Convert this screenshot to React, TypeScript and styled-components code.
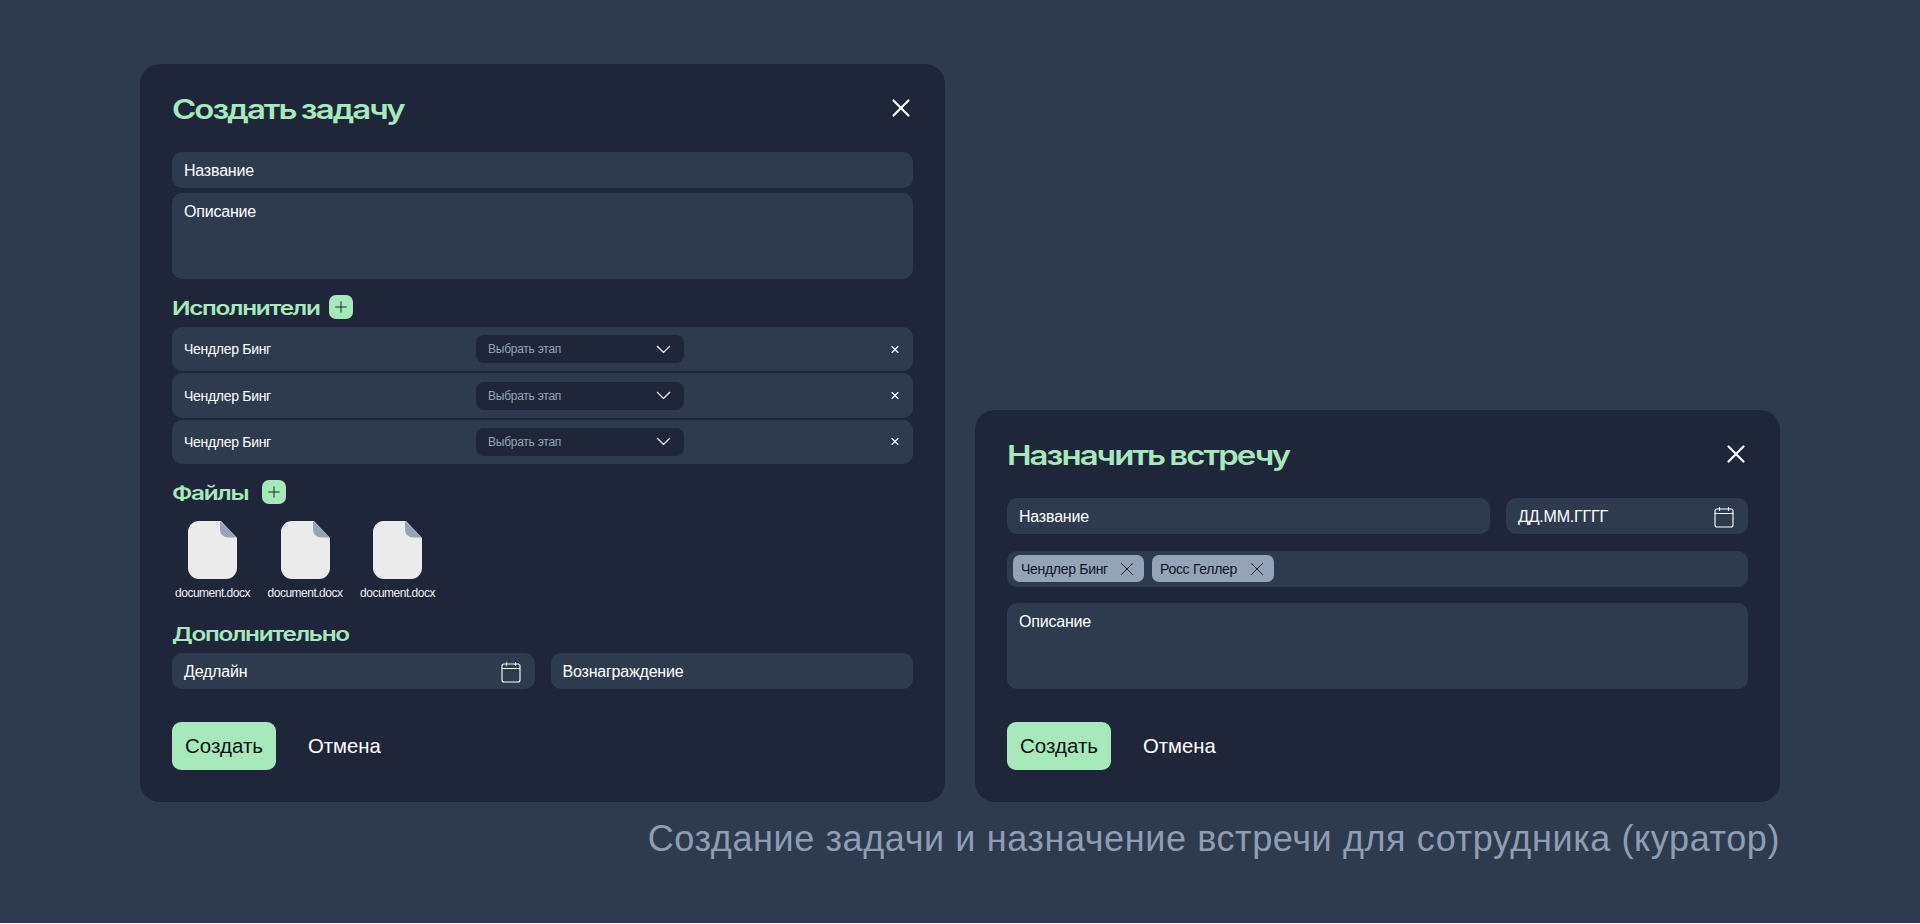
import styled, { createGlobalStyle } from "styled-components";
import { Plus, X } from "lucide-react";

const GlobalStyle = createGlobalStyle`
  html, body {
    margin: 0;
    background: #eef1f5;
  }
  * {
    box-sizing: border-box;
  }
`;

const Page = styled.div`
  height: 923px;
  padding: 64px 140px 0;
  font-family: "Liberation Sans", Arial, sans-serif;
  color: #fff;
  background: #2e3b4f;
`;
const Columns = styled.div`
  display: flex;
  align-items: flex-end;
  gap: 30px;
`;
const Panel = styled.section`
  width: 805px;
  padding: 25px 32px 32px;
  background: #20263a;
  border-radius: 20px;
`;
const PanelHeader = styled.header`
  height: 39px;
  margin-bottom: 24px;
  display: flex;
  align-items: center;
  justify-content: space-between;
`;
const Heading = styled.div<{ $width: number; $large?: boolean }>`
  width: ${(p) => p.$width}px;
  margin-top: 2px;
  font-family: Inter, sans-serif;
  font-weight: 600;
  font-size: ${(p) => (p.$large ? 27 : 19)}px;
  letter-spacing: ${(p) => (p.$large ? -1.6 : -1)}px;
  word-spacing: ${(p) => (p.$large ? -1 : 0)}px;
  color: #a6e9ba;
  white-space: nowrap;
  transform: scaleX(${(p) => (p.$large ? 1.22 : 1.28)});
  transform-origin: left center;
`;
const CloseButton = styled.button`
  width: 30px;
  height: 30px;
  margin: -2px -3px 0 0;
  padding: 0;
  border: 0;
  background: none;
  color: #fff;
  display: flex;
  align-items: center;
  justify-content: center;
`;
const Field = styled.div<{ $tall?: boolean; $flex?: string }>`
  height: ${(p) => (p.$tall ? 86 : 36)}px;
  flex: ${(p) => p.$flex ?? "none"};
  padding: ${(p) => (p.$tall ? "10px 12px" : "1px 12px 0")};
  display: flex;
  align-items: ${(p) => (p.$tall ? "flex-start" : "center")};
  justify-content: space-between;
  background: #2e3b4f;
  border-radius: 10px;
  font-size: 16px;
  line-height: 18px;
  letter-spacing: -0.2px;
`;
const Stack = styled.div<{ $gap: number }>`
  display: flex;
  flex-direction: column;
  gap: ${(p) => p.$gap}px;
`;
const FieldRow = styled.div`
  display: flex;
  gap: 16px;
`;
const SectionHead = styled.div<{ $top: number; $bottom: number }>`
  height: 24px;
  margin: ${(p) => p.$top}px 0 ${(p) => p.$bottom}px;
  display: flex;
  align-items: center;
  gap: 10px;
`;
const AddButton = styled.button`
  width: 24px;
  height: 24px;
  padding: 0;
  border: 0;
  border-radius: 7px;
  background: #a6e9ba;
  color: #11151f;
  display: flex;
  align-items: center;
  justify-content: center;
`;
const Performer = styled.div`
  height: 44.4px;
  padding: 0 12px;
  display: grid;
  grid-template-columns: 292px 208px 1fr;
  align-items: center;
  background: #2e3b4f;
  border-radius: 10px;
  font-size: 14px;
  letter-spacing: -0.3px;
`;
const StageSelect = styled.div`
  height: 28px;
  padding: 0 13px 0 12px;
  display: flex;
  align-items: center;
  justify-content: space-between;
  background: #20263a;
  border-radius: 8px;
  font-size: 12px;
  letter-spacing: -0.25px;
  color: #94a3b8;
`;
const RemoveButton = styled.button`
  justify-self: end;
  width: 12px;
  height: 12px;
  padding: 0;
  border: 0;
  background: none;
  color: #fff;
  display: flex;
  align-items: center;
  justify-content: center;
`;
const FileList = styled.div`
  margin-left: 2.5px;
  display: flex;
  gap: 16.5px;
`;
const FileItem = styled.div`
  width: 76px;
  display: flex;
  flex-direction: column;
  align-items: center;
  gap: 7px;
`;
const FileName = styled.span`
  font-size: 12px;
  line-height: 14px;
  letter-spacing: -0.5px;
  color: #eef0f3;
  white-space: nowrap;
`;
const Actions = styled.div`
  margin-top: 33px;
  display: flex;
  align-items: center;
  gap: 32px;
`;
const PrimaryButton = styled.button`
  width: 104px;
  height: 48px;
  padding: 0;
  border: 0;
  border-radius: 9px;
  background: #a6e9ba;
  color: #0d1018;
  font: 20.5px "Liberation Sans", Arial, sans-serif;
`;
const GhostButton = styled.button`
  padding: 0;
  border: 0;
  background: none;
  color: #fff;
  font: 20.3px "Liberation Sans", Arial, sans-serif;
`;
const TagBar = styled.div`
  height: 36px;
  padding: 0 6px;
  display: flex;
  align-items: center;
  gap: 8px;
  background: #2e3b4f;
  border-radius: 10px;
`;
const Tag = styled.div<{ $width: number }>`
  width: ${(p) => p.$width}px;
  height: 27px;
  padding: 0 6px 0 8px;
  display: flex;
  align-items: center;
  justify-content: space-between;
  background: #94a3b8;
  border-radius: 7px;
  font-size: 14px;
  letter-spacing: -0.3px;
  color: #11151f;
`;
const Caption = styled.div`
  margin-top: 15px;
  text-align: right;
  font-size: 36px;
  line-height: 44px;
  letter-spacing: 0.6px;
  color: #8f9db2;
`;
const CalendarSvg = styled.svg`
  margin-right: 2px;
`;

function CalendarIcon() {
  return (
    <CalendarSvg width="20" height="22" viewBox="0 0 20 22" fill="none" stroke="#fff" strokeWidth="1.1">
      <rect x="1" y="3" width="18" height="18" rx="2" />
      <path d="M1 7.5h18M5.5 1v4M14.5 1v4" />
    </CalendarSvg>
  );
}

function Chevron() {
  return (
    <svg width="15" height="9" viewBox="0 0 15 9" fill="none" stroke="#fff" strokeWidth="1.2">
      <path d="M1 1l6.5 6.5L14 1" />
    </svg>
  );
}

function FileIcon() {
  return (
    <svg width="49" height="58" viewBox="0 0 49 58">
      <path
        d="M11 0H33L49 17V47A11 11 0 0 1 38 58H11A11 11 0 0 1 0 47V11A11 11 0 0 1 11 0Z"
        fill="#ebebeb"
      />
      <path d="M32 0L49 16.5H41Q32 16.5 32 8Z" fill="#94a3b8" />
    </svg>
  );
}

function Assignee() {
  return (
    <Performer>
      <span>Чендлер Бинг</span>
      <StageSelect>
        Выбрать этап
        <Chevron />
      </StageSelect>
      <RemoveButton>
        <X size={13} strokeWidth={2.2} />
      </RemoveButton>
    </Performer>
  );
}

function Document() {
  return (
    <FileItem>
      <FileIcon />
      <FileName>document.docx</FileName>
    </FileItem>
  );
}

export default function App() {
  return (
    <Page>
      <GlobalStyle />
      <Columns>
        <Panel>
          <PanelHeader>
            <Heading $width={233} $large>Создать задачу</Heading>
            <CloseButton>
              <X size={30} strokeWidth={1.7} />
            </CloseButton>
          </PanelHeader>
          <Stack $gap={5}>
            <Field>Название</Field>
            <Field $tall>Описание</Field>
          </Stack>
          <SectionHead $top={16} $bottom={8}>
            <Heading $width={147}>Исполнители</Heading>
            <AddButton>
              <Plus size={18} strokeWidth={1.2} />
            </AddButton>
          </SectionHead>
          <Stack $gap={2}>
            <Assignee />
            <Assignee />
            <Assignee />
          </Stack>
          <SectionHead $top={16} $bottom={17}>
            <Heading $width={80}>Файлы</Heading>
            <AddButton>
              <Plus size={18} strokeWidth={1.2} />
            </AddButton>
          </SectionHead>
          <FileList>
            <Document />
            <Document />
            <Document />
          </FileList>
          <SectionHead $top={21} $bottom={8}>
            <Heading $width={174}>Дополнительно</Heading>
          </SectionHead>
          <FieldRow>
            <Field $flex="1">
              Дедлайн
              <CalendarIcon />
            </Field>
            <Field $flex="1">Вознаграждение</Field>
          </FieldRow>
          <Actions>
            <PrimaryButton>Создать</PrimaryButton>
            <GhostButton>Отмена</GhostButton>
          </Actions>
        </Panel>
        <Panel>
          <PanelHeader>
            <Heading $width={277} $large>Назначить встречу</Heading>
            <CloseButton>
              <X size={30} strokeWidth={1.7} />
            </CloseButton>
          </PanelHeader>
          <Stack $gap={16.5}>
            <FieldRow>
              <Field $flex="0 0 483px">Название</Field>
              <Field $flex="1">
                ДД.ММ.ГГГГ
                <CalendarIcon />
              </Field>
            </FieldRow>
            <TagBar>
              <Tag $width={131}>
                Чендлер Бинг
                <X size={22} strokeWidth={1} />
              </Tag>
              <Tag $width={122}>
                Росс Геллер
                <X size={22} strokeWidth={1} />
              </Tag>
            </TagBar>
            <Field $tall>Описание</Field>
          </Stack>
          <Actions>
            <PrimaryButton>Создать</PrimaryButton>
            <GhostButton>Отмена</GhostButton>
          </Actions>
        </Panel>
      </Columns>
      <Caption>Создание задачи и назначение встречи для сотрудника (куратор)</Caption>
    </Page>
  );
}
